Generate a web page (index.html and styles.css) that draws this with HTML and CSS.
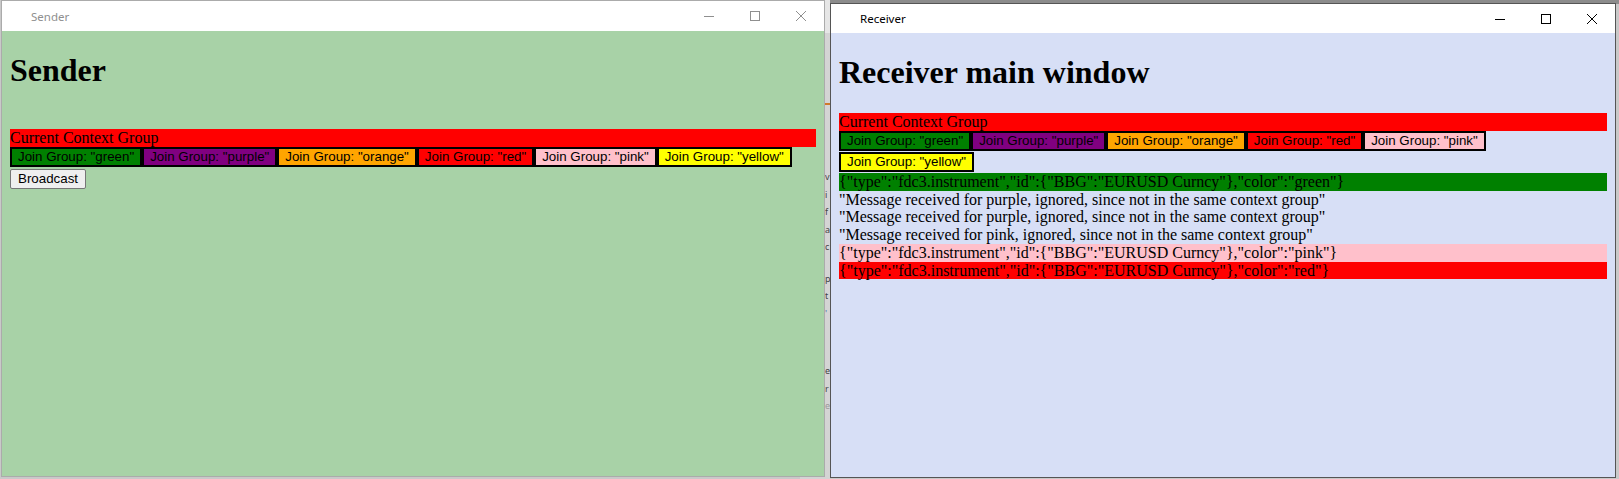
FILE: index.html
```html
<!DOCTYPE html>
<html>
<head>
<meta charset="utf-8">
<title>FDC3 Sender / Receiver</title>
<link rel="stylesheet" href="styles.css">
</head>
<body>
<div class="desktop">
  <div class="desktop-band"></div>
  <div class="backdrop">
    <div class="backdrop-top"></div>
    <div class="backdrop-accent"></div>
    <div class="backdrop-text">
      <div class="bt">v</div>
      <div class="bt">i</div>
      <div class="bt">f</div>
      <div class="bt">a</div>
      <div class="bt">c</div>
      <div class="bt bt2">p</div>
      <div class="bt">t</div>
      <div class="bt link">'</div>
      <div class="bt bt3">e</div>
      <div class="bt">r</div>
      <div class="bt muted">e</div>
    </div>
  </div>

  <section class="window sender-win">
    <header class="titlebar inactive">
      <span class="title">Sender</span>
      <div class="controls">
        <span class="ctl"><svg width="10" height="10" viewBox="0 0 10 10"><path d="M0 5.5H10" stroke="currentColor" stroke-width="1"/></svg></span>
        <span class="ctl"><svg width="10" height="10" viewBox="0 0 10 10"><rect x="0.5" y="0.5" width="9" height="9" fill="none" stroke="currentColor" stroke-width="1"/></svg></span>
        <span class="ctl"><svg width="10" height="10" viewBox="0 0 10 10"><path d="M0 0L10 10M10 0L0 10" stroke="currentColor" stroke-width="1"/></svg></span>
      </div>
    </header>
    <main class="page sender">
      <h1>Sender</h1>
      <div class="spacer"></div>
      <div class="current">Current Context Group</div>
      <div class="groups">
        <button class="join c-green">Join Group: "green"</button>
        <button class="join c-purple">Join Group: "purple"</button>
        <button class="join c-orange">Join Group: "orange"</button>
        <button class="join c-red">Join Group: "red"</button>
        <button class="join c-pink">Join Group: "pink"</button>
        <button class="join c-yellow">Join Group: "yellow"</button>
      </div>
      <div class="actions"><button class="broadcast">Broadcast</button></div>
    </main>
  </section>

  <section class="window receiver-win">
    <header class="titlebar">
      <span class="title">Receiver</span>
      <div class="controls">
        <span class="ctl"><svg width="10" height="10" viewBox="0 0 10 10"><path d="M0 5.5H10" stroke="currentColor" stroke-width="1"/></svg></span>
        <span class="ctl"><svg width="10" height="10" viewBox="0 0 10 10"><rect x="0.5" y="0.5" width="9" height="9" fill="none" stroke="currentColor" stroke-width="1"/></svg></span>
        <span class="ctl"><svg width="10" height="10" viewBox="0 0 10 10"><path d="M0 0L10 10M10 0L0 10" stroke="currentColor" stroke-width="1"/></svg></span>
      </div>
    </header>
    <main class="page receiver">
      <h1>Receiver main window</h1>
      <div class="current">Current Context Group</div>
      <div class="groups">
        <button class="join c-green">Join Group: "green"</button>
        <button class="join c-purple">Join Group: "purple"</button>
        <button class="join c-orange">Join Group: "orange"</button>
        <button class="join c-red">Join Group: "red"</button>
        <button class="join c-pink">Join Group: "pink"</button>
        <button class="join c-yellow">Join Group: "yellow"</button>
      </div>
      <div class="log">
        <div class="msg c-green">{"type":"fdc3.instrument","id":{"BBG":"EURUSD Curncy"},"color":"green"}</div>
        <div class="msg">"Message received for purple, ignored, since not in the same context group"</div>
        <div class="msg">"Message received for purple, ignored, since not in the same context group"</div>
        <div class="msg">"Message received for pink, ignored, since not in the same context group"</div>
        <div class="msg c-pink">{"type":"fdc3.instrument","id":{"BBG":"EURUSD Curncy"},"color":"pink"}</div>
        <div class="msg c-red">{"type":"fdc3.instrument","id":{"BBG":"EURUSD Curncy"},"color":"red"}</div>
      </div>
    </main>
  </section>
</div>
</body>
</html>
```

FILE: styles.css
```css
html, body {
  margin: 0;
  padding: 0;
}

.desktop {
  position: relative;
  width: 1619px;
  height: 479px;
  overflow: hidden;
  background: #c9c9c9;
}

.desktop-band {
  position: absolute;
  left: 826px;
  top: 0;
  width: 793px;
  height: 4px;
  background: #8c8c8c;
}

.backdrop {
  position: absolute;
  left: 800px;
  top: 0;
  width: 30px;
  height: 479px;
  background: #d4d4d4;
}

.backdrop-top {
  height: 33px;
  background: #e6e6e6;
}

.backdrop-accent {
  margin-top: 70px;
  height: 2px;
  background: #d07a2a;
}

.backdrop-text {
  margin: 63px 0 0 25px;
  font-family: "Noto Sans", "DejaVu Sans", sans-serif;
  font-size: 9px;
  line-height: 17.5px;
  color: #444;
}

.bt2 {
  margin-top: 14px;
}

.bt3 {
  margin-top: 40px;
}

.bt.link {
  color: #4a6fa5;
}

.bt.muted {
  color: #9a9a9a;
}

.window {
  position: absolute;
  box-sizing: border-box;
  display: flex;
  flex-direction: column;
  overflow: hidden;
}

.sender-win {
  left: 1px;
  top: 0;
  width: 824px;
  height: 477px;
  border: 1px solid #ababab;
}

.receiver-win {
  left: 830px;
  top: 3px;
  width: 786px;
  height: 475px;
  border: 1px solid #555555;
}

.titlebar {
  flex: none;
  height: 30px;
  background: #ffffff;
  display: flex;
  align-items: center;
  justify-content: space-between;
  font-family: "Noto Sans", "DejaVu Sans", sans-serif;
  font-size: 11.5px;
  color: #000000;
}

.receiver-win .titlebar {
  height: 29px;
}

.titlebar .title {
  padding-left: 29px;
}

.titlebar.inactive {
  color: #8f8f8f;
}

.controls {
  display: flex;
  height: 100%;
}

.ctl {
  width: 46px;
  height: 100%;
  display: flex;
  align-items: center;
  justify-content: center;
}

.ctl svg {
  display: block;
}

.page {
  flex: 1;
  padding: 0 8px 8px;
  font-family: "Liberation Serif", "Times New Roman", serif;
  font-size: 16px;
  color: #000;
}

.page.sender {
  background: #a8d2a7;
}

.page.receiver {
  background: #d7dff6;
}

.page h1 {
  margin: 0.67em 0;
  font-size: 32px;
  font-weight: bold;
  line-height: normal;
}

.spacer {
  height: 18px;
}

.current {
  background: #ff0000;
  line-height: 18px;
  height: 18px;
}

.groups {
  display: flex;
  flex-wrap: wrap;
  row-gap: 1px;
}

.join {
  box-sizing: border-box;
  height: 20px;
  margin: 0;
  padding: 0 6px;
  border: 2px solid #000;
  border-radius: 0;
  font-family: "Liberation Sans", Arial, sans-serif;
  font-size: 13.33px;
  color: #000;
  line-height: 16px;
}

.c-green { background: #008000; }
.c-purple { background: #800080; }
.c-orange { background: #ffa500; }
.c-red { background: #ff0000; }
.c-pink { background: #ffc0cb; }
.c-yellow { background: #ffff00; }

.actions {
  margin-top: 2px;
}

.broadcast {
  box-sizing: border-box;
  height: 20px;
  padding: 0 7px;
  background: #efefef;
  border: 1px solid #767676;
  border-radius: 2px;
  font-family: "Liberation Sans", Arial, sans-serif;
  font-size: 13.33px;
  color: #000;
  line-height: 16px;
}

.log {
  margin-top: 1px;
}

.msg {
  line-height: 17.75px;
  height: 17.75px;
  white-space: nowrap;
}
```
